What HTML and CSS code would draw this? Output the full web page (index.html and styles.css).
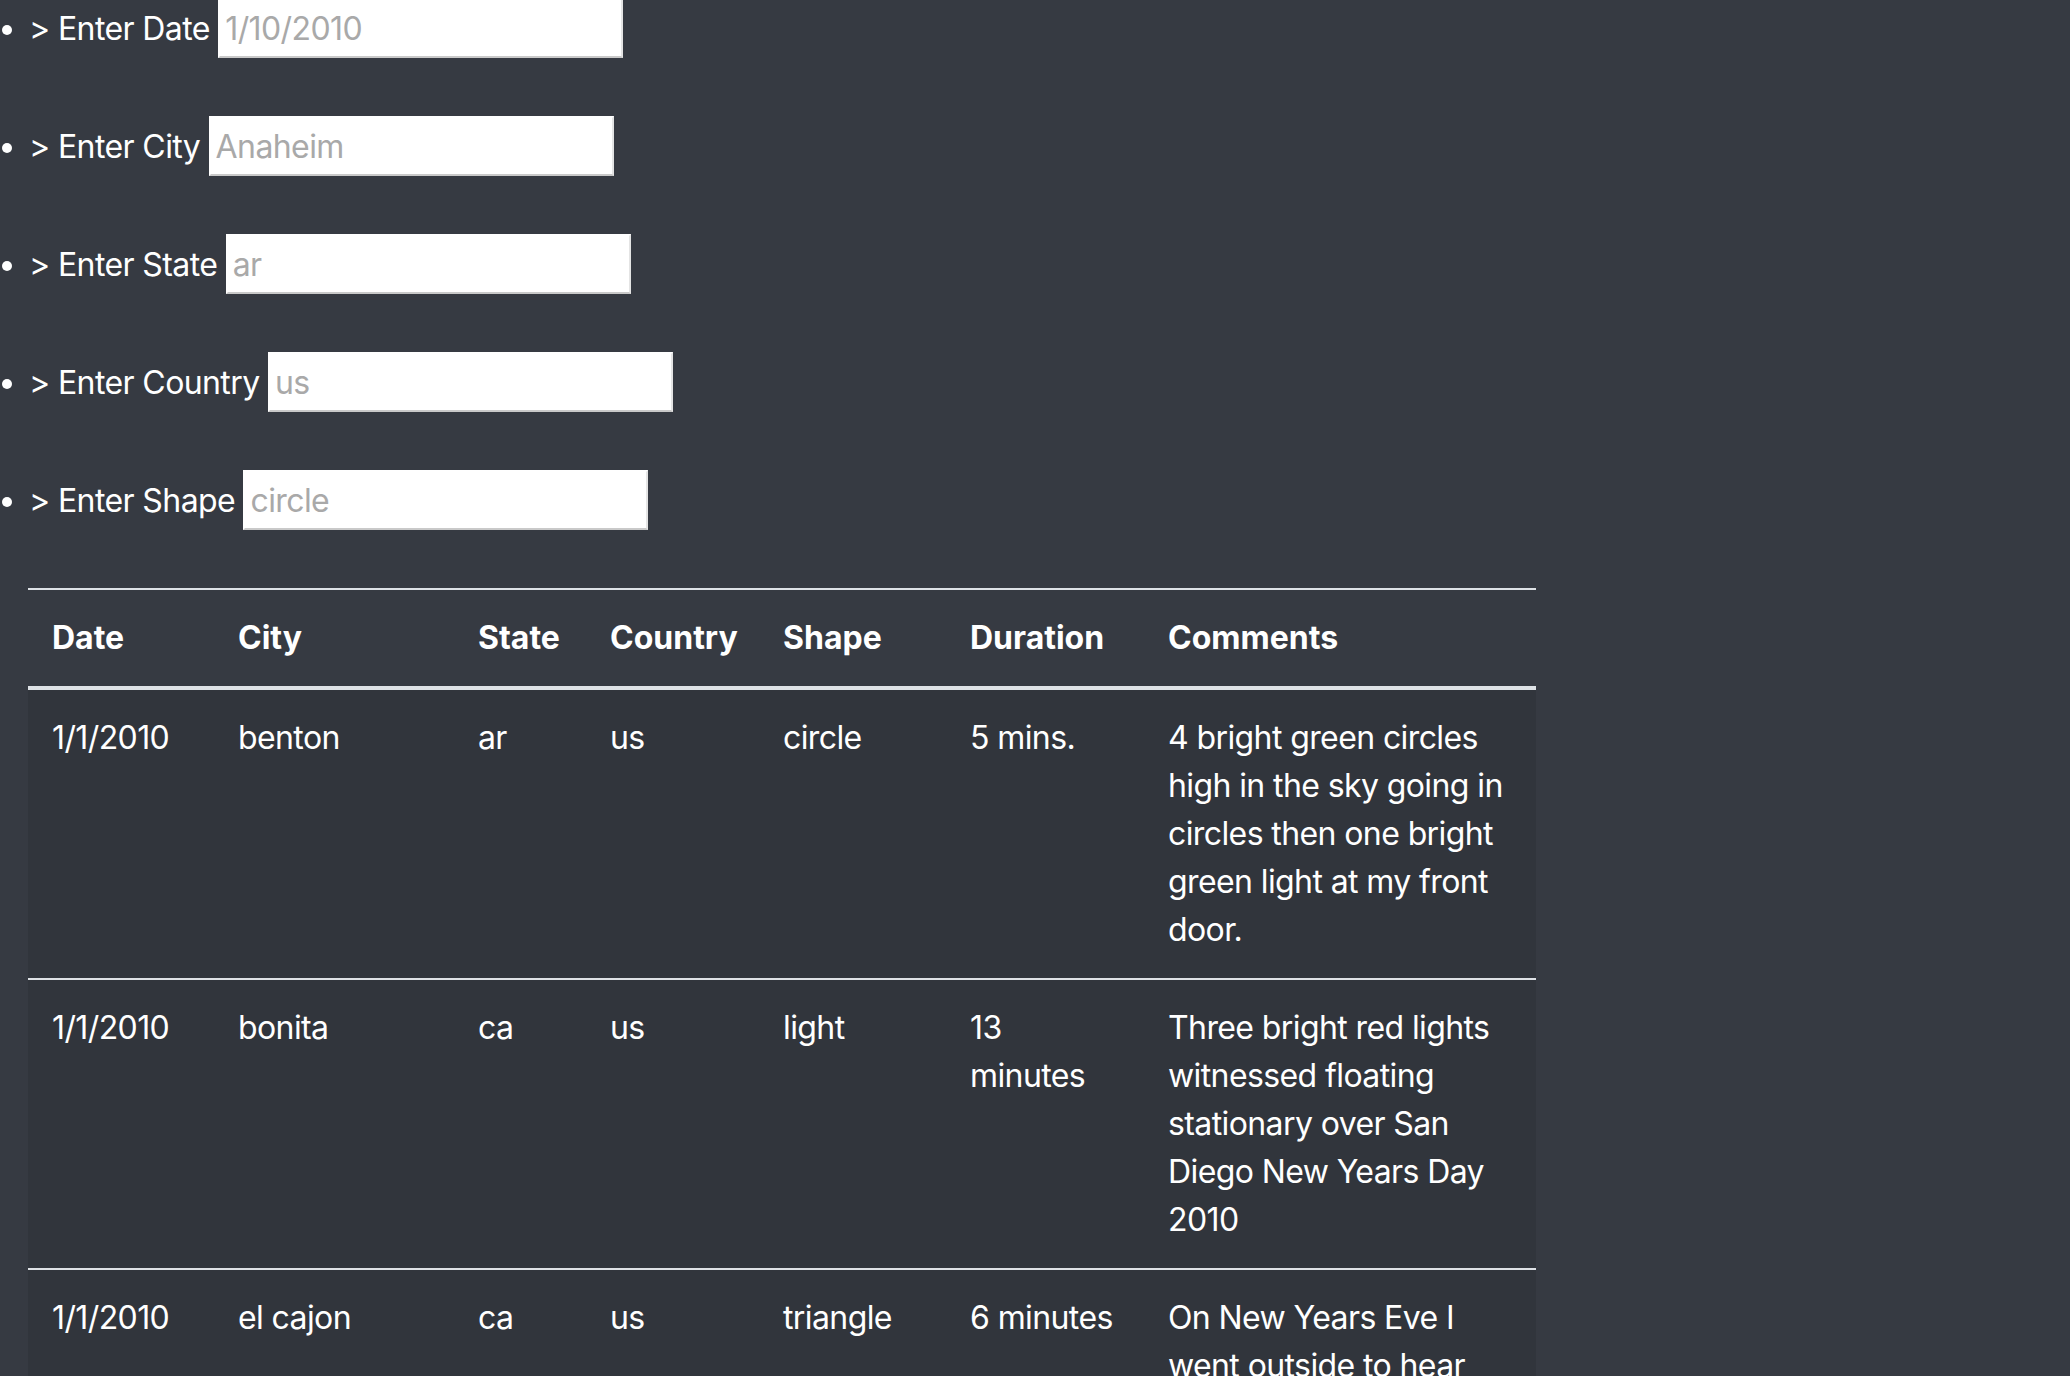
FILE: index.html
```html
<!DOCTYPE html>
<html lang="en">
<head>
<meta charset="utf-8">
<title>UFO Sightings</title>
<link rel="stylesheet" href="styles.css">
</head>
<body>
<div class="page">
  <ul class="filters">
    <li class="filter"><label for="datetime">&gt; Enter Date</label> <input class="field" id="datetime" type="text" placeholder="1/10/2010"></li>
    <li class="filter"><label for="city">&gt; Enter City</label> <input class="field" id="city" type="text" placeholder="Anaheim"></li>
    <li class="filter"><label for="state">&gt; Enter State</label> <input class="field" id="state" type="text" placeholder="ar"></li>
    <li class="filter"><label for="country">&gt; Enter Country</label> <input class="field" id="country" type="text" placeholder="us"></li>
    <li class="filter"><label for="shape">&gt; Enter Shape</label> <input class="field" id="shape" type="text" placeholder="circle"></li>
  </ul>

  <table class="sightings">
    <colgroup>
      <col class="c-date">
      <col class="c-city">
      <col class="c-state">
      <col class="c-country">
      <col class="c-shape">
      <col class="c-duration">
      <col class="c-comments">
    </colgroup>
    <thead>
      <tr>
        <th>Date</th>
        <th>City</th>
        <th>State</th>
        <th>Country</th>
        <th>Shape</th>
        <th>Duration</th>
        <th>Comments</th>
      </tr>
    </thead>
    <tbody>
      <tr>
        <td>1/1/2010</td>
        <td>benton</td>
        <td>ar</td>
        <td>us</td>
        <td>circle</td>
        <td>5 mins.</td>
        <td>4 bright green circles high in the sky going in circles then one bright green light at my front door.</td>
      </tr>
      <tr>
        <td>1/1/2010</td>
        <td>bonita</td>
        <td>ca</td>
        <td>us</td>
        <td>light</td>
        <td>13 minutes</td>
        <td>Three bright red lights witnessed floating stationary over San Diego New Years Day 2010</td>
      </tr>
      <tr>
        <td>1/1/2010</td>
        <td>el cajon</td>
        <td>ca</td>
        <td>us</td>
        <td>triangle</td>
        <td>6 minutes</td>
        <td>On New Years Eve I went outside to hear the fireworks and saw three lights in a triangle moving slowly over the hills.</td>
      </tr>
    </tbody>
  </table>
</div>
</body>
</html>
```

FILE: styles.css
```css
html, body {
  margin: 0;
  padding: 0;
  background: #363a42;
}

body {
  font-family: Inter, "Noto Sans", "Liberation Sans", sans-serif;
  font-size: 32px;
  line-height: 48px;
  letter-spacing: -0.6px;
  color: #ffffff;
}

.page {
  padding-left: 28px;
}

.filters {
  margin: -2px 0 0 0;
  padding: 0 0 0 1px;
}

.filter {
  margin-bottom: 58px;
}

.filter label {
  font-weight: 400;
}

.field {
  box-sizing: border-box;
  width: 405px;
  height: 60px;
  margin: 0;
  padding: 2px 5px;
  font: inherit;
  line-height: 48px;
  letter-spacing: -0.6px;
  color: #333;
  background: #ffffff;
  border: 2px solid #ffffff;
  border-bottom-color: #c9c9c9;
  border-right-color: #e4e4e4;
  border-radius: 0;
  outline: none;
}

.field::placeholder {
  color: #a9a9a9;
  opacity: 1;
}

.sightings {
  width: 1508px;
  table-layout: fixed;
  border-collapse: collapse;
  color: #ffffff;
}

.c-date { width: 186px; }
.c-city { width: 240px; }
.c-state { width: 132px; }
.c-country { width: 173px; }
.c-shape { width: 187px; }
.c-duration { width: 198px; }
.c-comments { width: 392px; }

.sightings th,
.sightings td {
  padding: 24px;
  text-align: left;
  vertical-align: top;
  border-top: 2px solid #dee2e6;
}

.sightings th {
  font-weight: 700;
  letter-spacing: normal;
  vertical-align: bottom;
  border-bottom: 4px solid #dee2e6;
}

.sightings tbody tr {
  background: #31353c;
}
```
